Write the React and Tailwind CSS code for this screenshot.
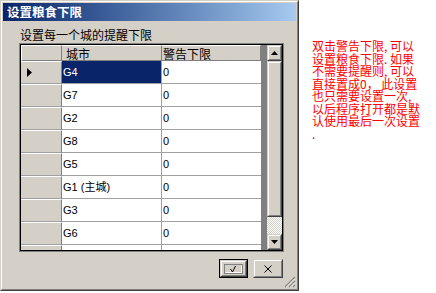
import React from "react";

const cjk = "font-['Noto_Sans_CJK_SC',sans-serif]";
const cell = "font-['Liberation_Sans','Noto_Sans_CJK_SC',sans-serif] text-[11px] text-black";

function Raised({ className = "", inner = "", children }) {
  return (
    <div className={"border border-t-[#d4d0c8] border-l-[#d4d0c8] border-r-[#404040] border-b-[#404040] " + className}>
      <div className={"w-full h-full border border-t-white border-l-white border-r-[#808080] border-b-[#808080] bg-[#d4d0c8] " + inner}>
        {children}
      </div>
    </div>
  );
}

const rows = ["G4", "G7", "G2", "G8", "G5", "G1 (主城)", "G3", "G6"];

const note =
  "双击警告下限, 可以\n设置粮食下限. 如果\n不需要提醒则, 可以\n直接置成0， 此设置\n也只需要设置一次,\n以后程序打开都是默\n认使用最后一次设置\n.";

export default function App() {
  return (
    <div className="w-[436px] h-[293px] bg-white flex overflow-hidden">
      {/* window */}
      <div className="w-[299px] h-[291px] shrink-0 border border-t-[#d4d0c8] border-l-[#d4d0c8] border-r-[#404040] border-b-[#404040]">
        <div className="relative w-full h-full border border-t-white border-l-white border-r-[#808080] border-b-[#808080] bg-[#d4d0c8] p-px flex flex-col">
          {/* title bar */}
          <div className={"h-[18px] shrink-0 bg-linear-to-r from-[#0a246a] to-[#a6caf0] flex items-center pl-[4px] text-white font-bold text-[12.5px] leading-[14px] " + cjk}>
            设置粮食下限
          </div>
          {/* subtitle */}
          <div className={"mt-[7px] h-[14px] pl-[17px] text-[12px] leading-[14px] text-black " + cjk}>
            设置每一个城的提醒下限
          </div>
          {/* grid */}
          <div className="mt-px ml-[16px] w-[265px] h-[209px] shrink-0 border border-[#808080]">
            <div className="w-full h-full border border-black flex bg-[#808080]">
              {/* table */}
              <div className="w-[246px] h-full flex flex-col overflow-hidden">
                {/* header */}
                <div className="h-[16px] shrink-0 flex">
                  <div className="w-[41px] h-full bg-[#d4d0c8] border-t border-l border-t-white border-l-white border-r border-b border-r-[#808080] border-b-[#808080]" />
                  <div className={"w-[100px] h-full bg-[#d4d0c8] border-t border-t-white border-r border-b border-r-[#808080] border-b-[#808080] pl-[4px] flex items-center text-[12px] leading-[13px] text-black " + cjk}>
                    城市
                  </div>
                  <div className={"w-[99px] h-full bg-[#d4d0c8] border-t border-t-white border-r border-b border-r-[#808080] border-b-[#808080] pl-px flex items-center text-[12px] leading-[13px] text-black " + cjk}>
                    警告下限
                  </div>
                  <div className="flex-1 h-full bg-[#808080]" />
                </div>
                {rows.concat([""]).map((name, i) => (
                  <div key={i} className="h-[23px] shrink-0 flex">
                    <div className="w-[41px] h-full bg-[#d4d0c8] border-t border-t-white border-b border-b-[#a0a0a0] border-r border-r-[#808080] flex items-center pl-[6px]">
                      {i === 0 && (
                        <svg width="5" height="9" viewBox="0 0 5 9">
                          <path d="M0 0 L5 4.5 L0 9 Z" fill="#000" />
                        </svg>
                      )}
                    </div>
                    <div
                      className={
                        "w-[100px] h-full border-r border-b border-r-[#a0a0a0] border-b-[#a0a0a0] pl-px flex items-center " +
                        cell +
                        (i === 0 ? " bg-[#0a246a] !text-white" : " bg-white")
                      }
                    >
                      {name}
                    </div>
                    <div className={"w-[99px] h-full bg-white border-b border-b-[#a0a0a0] pl-px flex items-center " + cell}>
                      {name ? "0" : ""}
                    </div>
                    <div className="flex-1 h-full bg-[#808080]" />
                  </div>
                ))}
              </div>
              {/* scrollbar */}
              <div className="w-[15px] h-full flex flex-col">
                <Raised className="h-[16px] shrink-0" inner="flex items-center justify-center">
                  <svg width="7" height="4" viewBox="0 0 7 4">
                    <path d="M3.5 0 L7 4 L0 4 Z" fill="#000" />
                  </svg>
                </Raised>
                <Raised className="h-[156px] shrink-0" />
                <div className="flex-1 bg-[repeating-conic-gradient(#ffffff_0%_25%,#d4d0c8_0%_50%)] bg-[length:2px_2px]" />
                <Raised className="h-[16px] shrink-0" inner="flex items-center justify-center">
                  <svg width="7" height="4" viewBox="0 0 7 4">
                    <path d="M0 0 L7 0 L3.5 4 Z" fill="#000" />
                  </svg>
                </Raised>
              </div>
            </div>
          </div>
          {/* buttons */}
          <div className="mt-[7px] pl-[216px] flex gap-[5px]">
            <div className="w-[29px] h-[19px] border border-black">
              <Raised className="w-full h-full" inner="flex items-center justify-center">
                <svg width="19" height="10" viewBox="0 0 19 10">
                  <rect x="0.5" y="0.5" width="18" height="9" fill="#d4d0c8" stroke="#808080" />
                  <path d="M1.5 8.5 L17.5 8.5 L17.5 1.5" fill="none" stroke="#ffffff" />
                  <path d="M6.5 5 L8.5 8 L11.5 2" fill="none" stroke="#000" strokeWidth="1" />
                </svg>
              </Raised>
            </div>
            <Raised className="w-[30px] h-[19px]" inner="flex items-center justify-center">
              <svg width="8" height="8" viewBox="0 0 8 8">
                <path d="M0.5 0.5 L7.5 7.5 M7.5 0.5 L0.5 7.5" stroke="#000" strokeWidth="1" />
              </svg>
            </Raised>
          </div>
          {/* resize grip */}
          <svg className="absolute right-[1px] bottom-[1px]" width="12" height="12" viewBox="0 0 12 12">
            <path d="M11 1 L1 11 M11 5 L5 11 M11 9 L9 11" stroke="#808080" strokeWidth="1.2" />
            <path d="M11 2.5 L2.5 11 M11 6.5 L6.5 11 M11 10.5 L10.5 11" stroke="#ffffff" strokeWidth="0.8" />
          </svg>
        </div>
      </div>
      {/* note */}
      <div className={"ml-[13px] mt-[40px] w-[115px] whitespace-pre-line text-[12px] leading-[12.5px] text-[#ff0000] " + cjk}>
        {note}
      </div>
    </div>
  );
}
